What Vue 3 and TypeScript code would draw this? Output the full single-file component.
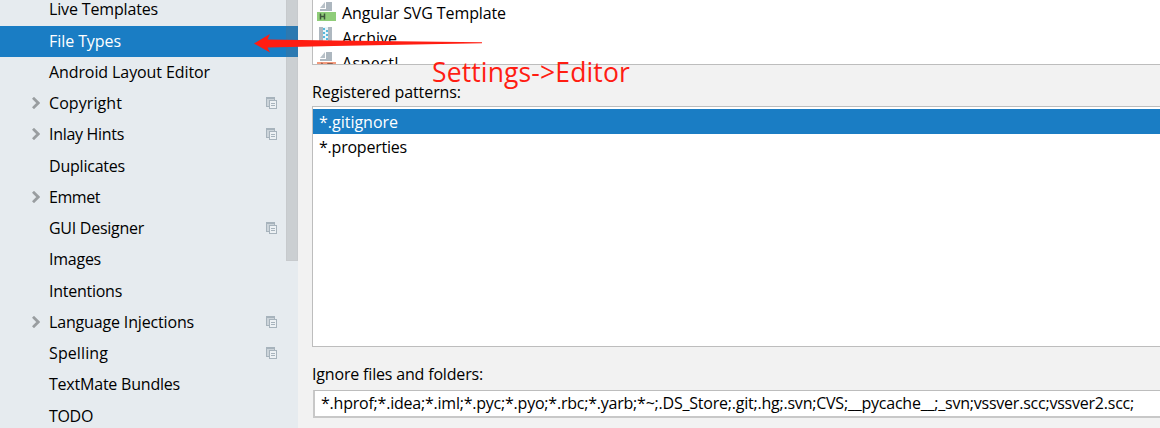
<script setup lang="ts">
interface Item { label: string; arrow?: boolean; scoped?: boolean; selected?: boolean; width: number }
const items: Item[] = [
  { label: 'Live Templates', width: 109 },
  { label: 'File Types', selected: true, width: 72 },
  { label: 'Android Layout Editor', width: 161 },
  { label: 'Copyright', arrow: true, scoped: true, width: 73 },
  { label: 'Inlay Hints', arrow: true, scoped: true, width: 75 },
  { label: 'Duplicates', width: 76 },
  { label: 'Emmet', arrow: true, width: 51 },
  { label: 'GUI Designer', scoped: true, width: 95 },
  { label: 'Images', width: 52 },
  { label: 'Intentions', width: 73 },
  { label: 'Language Injections', arrow: true, scoped: true, width: 145 },
  { label: 'Spelling', scoped: true, width: 59 },
  { label: 'TextMate Bundles', width: 131 },
  { label: 'TODO', width: 44 },
]
const fileTypes = [
  { label: 'Angular SVG Template', kind: 'html', width: 164 },
  { label: 'Archive', kind: 'zip', width: 55 },
  { label: 'AspectJ', kind: 'aspect', width: 57 },
]
const patterns = [
  { label: '*.gitignore', width: 79 },
  { label: '*.properties', width: 88 },
]
const ignored = '*.hprof;*.idea;*.iml;*.pyc;*.pyo;*.rbc;*.yarb;*~;.DS_Store;.git;.hg;.svn;CVS;__pycache__;_svn;vssver.scc;vssver2.scc;'

// Spreads a label's letters so that it fills its column width.
const vFit = {
  mounted(el: HTMLElement, binding: { value: number }) {
    const natural = el.getBoundingClientRect().width
    const count = (el.textContent ?? '').length
    el.style.letterSpacing = `${(binding.value - natural) / count}px`
  },
}
</script>

<template>
  <div class="window">
    <aside class="sidebar">
      <div v-for="item in items" :key="item.label" class="node" :class="{ selected: item.selected }">
        <svg v-if="item.arrow" class="chevron" width="8" height="12" viewBox="0 0 8 12">
          <path d="M1 .8L6.2 6L1 11.2" fill="none" stroke="#999da0" stroke-width="2.8" />
        </svg>
        <span v-fit="item.width" class="label">{{ item.label }}</span>
        <svg v-if="item.scoped" class="scope" width="11" height="12" viewBox="0 0 11 12">
          <path d="M0 0H9V3H8V2H2V9H3V10H0Z" fill="#a7b3bc" />
          <path d="M1 2H2V9H1ZM2 2H8V3H3V9H2Z" fill="#ccd4da" />
          <rect x="3.5" y="3.5" width="7" height="8" fill="#edf1f4" stroke="#a7b3bc" />
          <path d="M5 6.5H9M5 8.5H9" stroke="#a7b3bc" />
        </svg>
      </div>
      <div class="scrollbar"></div>
    </aside>
    <main class="content">
      <div class="box types">
        <div v-for="t in fileTypes" :key="t.label" class="type">
          <svg class="icon" width="19" height="20" viewBox="0 0 19 20">
            <template v-if="t.kind === 'zip'">
              <path d="M2 0H15V18H2Z" fill="#aeb8c0" />
              <path d="M6 0H11V18H6Z" fill="#e8f5fa" />
              <path d="M6 1H8V3H6ZM9 3H11V5H9ZM6 5H8V7H6ZM9 7H11V9H9ZM6 9H8V11H6ZM9 11H11V13H9Z" fill="#55b9dc" />
            </template>
            <template v-else>
              <path d="M3 6L8 0V6Z" fill="#b8c1c8" />
              <path d="M9 0H15V9H3V7H9Z" fill="#adb7bf" />
              <rect x="0" y="10" width="19" height="9" :fill="t.kind === 'html' ? '#8fcd79' : '#f39a7c'" />
              <path v-if="t.kind === 'html'" d="M3.5 11.5V17.5M7.5 11.5V17.5M3.5 14.5H7.5" fill="none" stroke="#3d563b" stroke-width="1.5" />
              <path v-else d="M3 17L5 12L8 17M11 17V12H15V17" fill="none" stroke="#744536" stroke-width="1.5" />
            </template>
          </svg>
          <span v-fit="t.width" class="label">{{ t.label }}</span>
        </div>
      </div>
      <div class="heading registered"><span v-fit="149" class="label">Registered patterns:</span></div>
      <div class="box patterns">
        <div v-for="(p, i) in patterns" :key="p.label" class="pattern" :class="{ selected: i === 0 }">
          <span v-fit="p.width" class="label">{{ p.label }}</span>
        </div>
      </div>
      <div class="heading ignore"><span v-fit="171" class="label">Ignore files and folders:</span></div>
      <div class="field"><span v-fit="813" class="label">{{ ignored }}</span></div>
    </main>
    <svg class="pointer" width="230" height="22" viewBox="0 0 230 22">
      <path d="M0 9.5L16 0L13.5 5.5L80 6.5L228 8.2V9.2L160 10.5L80 12L13.5 13.5L16 18.5Z" fill="#ff1d12" />
    </svg>
    <div class="note"><span v-fit="198" class="label">Settings-&gt;Editor</span></div>
  </div>
</template>

<style>
body { overflow: hidden; }
</style>
<style scoped>
.window { position: relative; display: flex; width: 1160px; height: 428px; overflow: hidden; background: #f2f2f2; color: #000; font-family: "Open Sans", "Noto Sans", sans-serif; font-size: 16px; }
.label { display: inline-block; white-space: pre; }
.sidebar { position: relative; width: 298px; flex: none; background: #e6ebef; box-sizing: border-box; overflow: hidden; }
.node { display: flex; align-items: center; box-sizing: border-box; height: 31.25px; padding: 0 21px 2.1px 49px; line-height: 22px; }
.node:first-child { margin-top: -5.25px; }
.selected { background: #1a7dc4; color: #fff; }
.chevron { margin: 0 9px 0 -17px; }
.scope { margin-left: auto; }
.scrollbar { position: absolute; left: 286px; top: 0; width: 12px; height: 261px; box-sizing: border-box; background: rgba(110, 110, 110, .22); border: solid rgba(110, 110, 110, .04); border-width: 0 1px 1px; }
.content { flex: 1; min-width: 0; padding-left: 14px; }
.box { box-sizing: border-box; background: #fff; border: 1px solid #bdbdbd; border-right: 0; overflow: hidden; }
.types { height: 65px; border-top: 0; }
.type { display: flex; align-items: center; box-sizing: border-box; height: 25px; padding: 0 0 0 4px; line-height: 22px; }
.icon { margin: 0 6px 1px 0; }
.heading { box-sizing: border-box; padding-top: 16px; line-height: 22px; }
.registered { height: 41px; }
.patterns { height: 241px; padding-top: 2px; }
.pattern { display: flex; align-items: center; box-sizing: border-box; height: 25px; padding: 0 0 0 6px; line-height: 22px; }
.ignore { height: 43px; }
.field { display: flex; align-items: center; margin-left: 1px; box-sizing: border-box; height: 28px; padding: 0 0 1px 6px; background: #fff; border: 1px solid #bdbdbd; border-left: 2px solid #c8c8c8; border-bottom: 2px solid #c8c8c8; border-right: 0; line-height: 22px; }
.pointer { position: absolute; left: 254px; top: 34px; }
.note { position: absolute; left: 432px; top: 54px; color: #ff1d12; font-size: 26.5px; line-height: 36px; }
</style>
